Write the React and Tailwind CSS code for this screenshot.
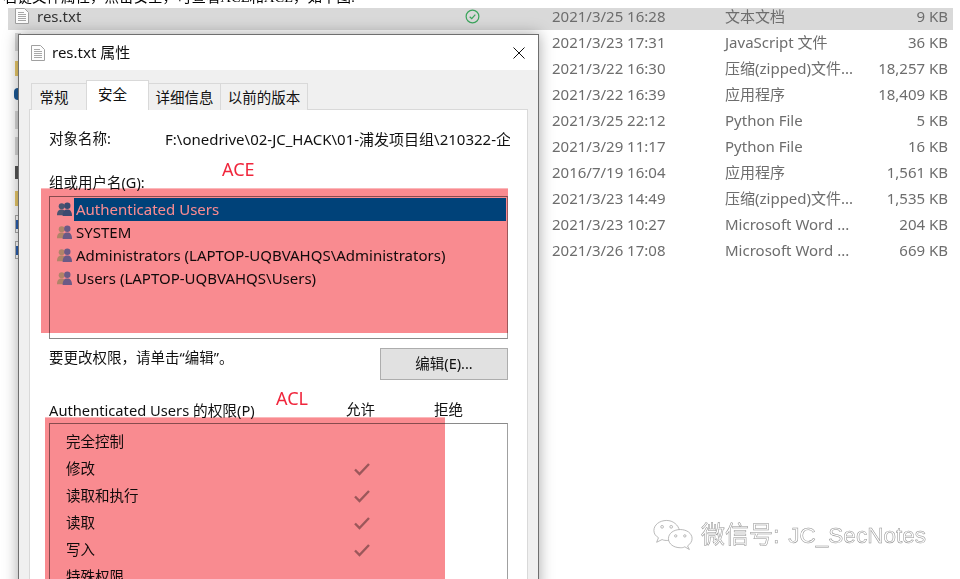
const cjk = `font-['Noto_Sans','Noto_Sans_CJK_SC',sans-serif]`;

const files = [
  { date: "2021/3/25 16:28", type: "文本文档", size: "9 KB", kind: "doc", selected: true },
  { date: "2021/3/23 17:31", type: "JavaScript 文件", size: "36 KB", kind: "gray" },
  { date: "2021/3/22 16:30", type: "压缩(zipped)文件...", size: "18,257 KB", kind: "zip" },
  { date: "2021/3/22 16:39", type: "应用程序", size: "18,409 KB", kind: "blue" },
  { date: "2021/3/25 22:12", type: "Python File", size: "5 KB", kind: "gray" },
  { date: "2021/3/29 11:17", type: "Python File", size: "16 KB", kind: "gray" },
  { date: "2016/7/19 16:04", type: "应用程序", size: "1,561 KB", kind: "dark" },
  { date: "2021/3/23 14:49", type: "压缩(zipped)文件...", size: "1,535 KB", kind: "zip" },
  { date: "2021/3/23 10:27", type: "Microsoft Word ...", size: "204 KB", kind: "word" },
  { date: "2021/3/26 17:08", type: "Microsoft Word ...", size: "669 KB", kind: "word" },
];

const principals = [
  { name: "Authenticated Users", selected: true },
  { name: "SYSTEM" },
  { name: "Administrators (LAPTOP-UQBVAHQS\\Administrators)" },
  { name: "Users (LAPTOP-UQBVAHQS\\Users)" },
];

const permissions = [
  { name: "完全控制" },
  { name: "修改", allow: true },
  { name: "读取和执行", allow: true },
  { name: "读取", allow: true },
  { name: "写入", allow: true },
  { name: "特殊权限" },
];

function DocIcon({ className }) {
  return (
    <svg viewBox="0 0 14 16" className={className}>
      <path d="M0.5 0.5H9.5L13.5 4.5V15.5H0.5Z" fill="#fdfdfd" stroke="#a0a0a0" />
      <path d="M3 4.5H9M3 6.5H11M3 8.5H11M3 10.5H11M3 12.5H11" stroke="#a8a8a8" />
    </svg>
  );
}

function PeekIcon({ kind }) {
  if (kind === "doc") return <DocIcon className="w-[14px] h-[16px]" />;
  if (kind === "zip") return <div className="w-[5px] h-[15px] bg-[#e8c86a]" />;
  if (kind === "blue") return <div className="w-[6px] h-[12px] -ml-px bg-[#1d5a96] rounded-l-sm" />;
  if (kind === "gray") return <div className="w-[6px] h-[18px] bg-[#d8d8d8]" />;
  if (kind === "dark") return <div className="w-[6px] h-[13px] bg-[#555]" />;
  if (kind === "word")
    return (
      <div className="w-[6px] h-[18px] border-l border-y border-[#aaa] flex items-center">
        <div className="w-[5px] h-[9px] bg-[#2a5fb0]" />
      </div>
    );
  return null;
}

function FileRow({ file }) {
  return (
    <div className={`flex items-center ${file.selected ? "h-[22px] pb-[6px] bg-[#d9d9d9]" : "h-[26px] pb-[2px]"}`}>
      <div className="w-[29px] pl-[7px] flex justify-start shrink-0">
        <PeekIcon kind={file.kind} />
      </div>
      <span className="w-[426px] shrink-0 text-[15px] text-[#333]">{file.selected ? "res.txt" : ""}</span>
      <div className="w-[89px] shrink-0">
        {file.selected && (
          <svg viewBox="0 0 16 16" className="w-[15px] h-[15px] ml-[2px]">
            <circle cx="8" cy="8" r="6.8" fill="none" stroke="#3ba55c" strokeWidth="1.3" />
            <path d="M5 8.2L7.2 10.3L11 6" fill="none" stroke="#3ba55c" strokeWidth="1.3" />
          </svg>
        )}
      </div>
      <span className="w-[173px] shrink-0 text-[15px] text-[#6d6d6d] whitespace-nowrap">{file.date}</span>
      <span className="w-[130px] shrink-0 text-[15px] text-[#6d6d6d] whitespace-nowrap">{file.type}</span>
      <span className="w-[93px] shrink-0 text-right text-[15px] text-[#6d6d6d] whitespace-nowrap">{file.size}</span>
    </div>
  );
}

function UsersIcon({ dark }) {
  const a = dark ? "#4c9ac6" : "#b4f2b8";
  const b = dark ? "#3c88c6" : "#6ea5ed";
  return (
    <svg viewBox="0 0 18 16" className="w-[17px] h-[15px] shrink-0">
      <circle cx="6" cy="4.5" r="3.2" fill={a} />
      <path d="M1 14C1 9.5 3 8 6 8S10 9.5 10 14Z" fill={a} />
      <circle cx="12" cy="4" r="3.4" fill={b} />
      <path d="M7 15C7 10 9 8 12 8S17 10 17 15Z" fill={b} />
    </svg>
  );
}

function Tab({ label, active, className }) {
  return (
    <div
      className={`flex items-center justify-center border border-b-0 border-[#d9d9d9] text-[14.5px] ${
        active ? "bg-white h-[30px] pb-[2px]" : "bg-[#f0f0f0] h-[27px] pt-[1px]"
      } ${className}`}
    >
      {label}
    </div>
  );
}

function Dialog() {
  return (
    <div className="absolute left-[18px] top-[34px] w-[521px] h-[560px] bg-[#f0f0f0] border border-[#6f6f6f] shadow-[0_0_14px_rgba(0,0,0,0.35)] text-[#111]">
      <div className="h-[35px] bg-white flex items-center pl-[12px] pr-[13px]">
        <DocIcon className="w-[14px] h-[16px] mr-[7px]" />
        <span className="text-[15px] flex-1">res.txt 属性</span>
        <svg viewBox="0 0 12 12" className="w-[12px] h-[12px]">
          <path d="M0.5 0.5L11.5 11.5M11.5 0.5L0.5 11.5" stroke="#111" strokeWidth="1" />
        </svg>
      </div>
      <div className="pl-[10px] pt-[10px] flex items-end relative z-10">
        <Tab label="常规" className="w-[56px] ml-[2px] pr-[10px]" />
        <Tab label="安全" active className="w-[63px] -ml-px pr-[10px]" />
        <Tab label="详细信息" className="w-[73px] -ml-px" />
        <Tab label="以前的版本" className="w-[88px] -ml-px" />
      </div>
      <div className="mx-[10px] -mt-px h-[480px] bg-white border border-[#d9d9d9] pl-[19px] pr-[19px] text-[14.5px]">
        <div className="flex h-[20px] mt-[19px] items-center -mr-[2px]">
          <span className="w-[116px] shrink-0">对象名称:</span>
          <span className="whitespace-nowrap overflow-hidden text-[15px]">F:\onedrive\02-JC_HACK\01-浦发项目组\210322-企业安全</span>
        </div>
        <div className="mt-[23px] h-[20px] leading-[20px]">组或用户名(G):</div>
        <div className="mt-[4px] h-[143px] border border-[#8a8a8a] border-r-[#a0a0a0] p-px">
          {principals.map((p) => (
            <div key={p.name} className="h-[23px] flex items-center">
              <div className="w-[23px] pl-[5px] shrink-0">
                <UsersIcon dark={p.selected} />
              </div>
              <div
                className={`flex-1 h-full flex items-center pl-[2px] text-[15px] ${
                  p.selected ? "bg-[#0078d7] text-white" : ""
                }`}
              >
                {p.name}
              </div>
            </div>
          ))}
        </div>
        <div className="flex justify-between mt-[9px] h-[32px]">
          <span className="leading-[18px]">要更改权限，请单击“编辑”。</span>
          <div className="w-[128px] h-[32px] bg-[#e1e1e1] border border-[#adadad] flex items-center justify-center">
            编辑(E)...
          </div>
        </div>
        <div className="flex mt-[20px] h-[20px] items-center">
          <span className="w-[297px] whitespace-nowrap text-[14.7px]">Authenticated Users 的权限(P)</span>
          <span className="w-[88px]">允许</span>
          <span>拒绝</span>
        </div>
        <div className="mt-[3px] h-[200px] border border-[#8a8a8a] border-r-[#a0a0a0] pt-[4px]">
          {permissions.map((p) => (
            <div key={p.name} className="h-[27px] flex items-center pl-[16px]">
              <span className="w-[288px]">{p.name}</span>
              {p.allow && (
                <svg viewBox="0 0 16 14" className="w-[16px] h-[14px]">
                  <path d="M1 7.5L5.5 12L15 2" fill="none" stroke="#a0a0a0" strokeWidth="2.4" />
                </svg>
              )}
            </div>
          ))}
        </div>
      </div>
    </div>
  );
}

function Watermark() {
  return (
    <div className="absolute left-[653px] top-[518px] flex items-center gap-[8px]">
      <svg viewBox="0 0 44 34" className="w-[40px] h-[34px]" fill="#fff" stroke="#a0a0a0" strokeWidth="0.8">
        <path d="M15 1C7 1 1 6 1 12C1 16 3 18 6 20L4 25L10 22C12 23 14 23 16 23C22 23 28 19 29 12C28 6 22 1 15 1Z" />
        <path d="M30 11C23 11 17 15 17 21S23 31 30 31C32 31 33 31 35 30L40 33L38 29C41 27 43 24 43 21C43 15 37 11 30 11Z" />
        <circle cx="10" cy="8" r="1.5" />
        <circle cx="20" cy="8" r="1.5" />
        <circle cx="25" cy="18" r="1.3" />
        <circle cx="35" cy="18" r="1.3" />
      </svg>
      <span className="text-[24px] leading-[32px] text-white whitespace-nowrap font-['Liberation_Sans','Noto_Sans_CJK_SC',sans-serif] [-webkit-text-stroke:0.5px_#8f8f8f]">
        微信号: <span className="text-[22.5px] ml-[2px]">JC_SecNotes</span>
      </span>
    </div>
  );
}

export default function App() {
  return (
    <div className={`relative w-[960px] h-[579px] overflow-hidden bg-white ${cjk}`}>
      <div className="h-[8px] overflow-hidden relative">
        <div className="-mt-[13px] pl-[3px] text-[14.5px] leading-[20px] text-black font-['Liberation_Serif','Noto_Sans_CJK_SC',serif] whitespace-nowrap">
          右键文件属性，点击安全，可查看ACE和ACL，如下图:
        </div>
      </div>
      <div className="ml-[8px] w-[945px]">
        {files.map((f, i) => (
          <FileRow key={i} file={f} />
        ))}
      </div>

      <Dialog />

      {/* red highlight boxes drawn over the screenshot */}
      <div className="absolute left-[41px] top-[188px] w-[467px] h-[145px] bg-[#f98b90] border-t border-[#fbb8bb] mix-blend-multiply" />
      <div className="absolute left-[45px] top-[417px] w-[400px] h-[162px] bg-[#f98b90] border-t border-[#fbb8bb] mix-blend-multiply" />
      <span className="absolute left-[222px] top-[157px] text-[18px] leading-[24px] text-[#f0263c]">ACE</span>
      <span className="absolute left-[276px] top-[386px] text-[18px] leading-[24px] text-[#f0263c]">ACL</span>

      <Watermark />
    </div>
  );
}
